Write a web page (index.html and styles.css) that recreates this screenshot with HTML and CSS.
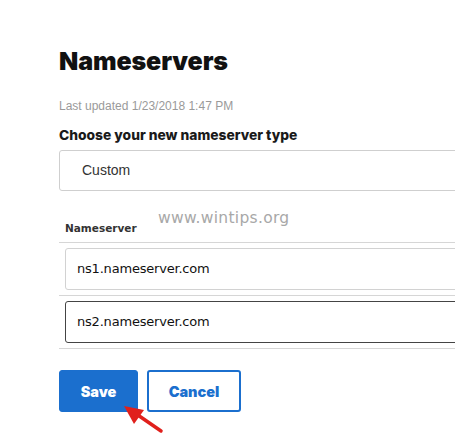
FILE: index.html
```html
<!DOCTYPE html>
<html>
<head>
<meta charset="utf-8">
<link rel="stylesheet" href="styles.css">
</head>
<body>
<div class="page">
  <div class="form">
    <h1 class="title">Nameservers</h1>
    <div class="updated">Last updated 1/23/2018 1:47 PM</div>
    <div class="field-label">Choose your new nameserver type</div>
    <div class="select">Custom</div>
    <div class="ns-head">
      <span class="ns-label">Nameserver</span>
      <span class="watermark">www.wintips.org</span>
    </div>
    <div class="row"><div class="input">ns1.nameserver.com</div></div>
    <div class="row"><div class="input focused">ns2.nameserver.com</div></div>
    <div class="actions">
      <button class="btn primary">Save</button>
      <button class="btn secondary">Cancel</button>
      <svg class="arrow" width="60" height="40" viewBox="0 0 60 40">
        <line x1="51" y1="32" x2="22" y2="12" stroke="#e0201c" stroke-width="3.5" stroke-linecap="round"/>
        <polygon points="14,7 34,11 24,25" fill="#e0201c"/>
      </svg>
    </div>
  </div>
</div>
</body>
</html>
```
FILE: styles.css
```css
html, body {
  margin: 0;
  padding: 0;
  background: #fff;
}
.page {
  width: 455px;
  height: 442px;
  box-sizing: border-box;
  overflow: hidden;
  padding-left: 59px;
  padding-top: 48px;
}
.form {
  width: 460px;
  font-family: "Liberation Sans", Arial, sans-serif;
  color: #111;
}
.title {
  margin: 0;
  font-family: "Inter", "Liberation Sans", sans-serif;
  font-weight: 900;
  font-size: 25px;
  line-height: 26px;
  letter-spacing: -0.1px;
  color: #111;
}
.updated {
  margin-top: 25px;
  font-size: 12px;
  line-height: 14px;
  color: #9a9a9a;
}
.field-label {
  margin-top: 14px;
  font-family: "Inter", "Liberation Sans", sans-serif;
  font-weight: 800;
  font-size: 13.8px;
  line-height: 16px;
  color: #1a1a1a;
}
.select {
  margin-top: 7px;
  box-sizing: border-box;
  height: 41px;
  border: 1px solid #cfcfcf;
  border-radius: 3px;
  padding-left: 22px;
  font-size: 14px;
  line-height: 39px;
  color: #333;
}
.ns-head {
  position: relative;
  height: 52px;
  border-bottom: 1px solid #d6d6d6;
  box-sizing: border-box;
}
.ns-label {
  position: absolute;
  left: 6px;
  top: 31px;
  font-family: "DejaVu Sans", sans-serif;
  font-weight: 700;
  font-size: 10.5px;
  color: #333;
}
.watermark {
  position: absolute;
  left: 99px;
  top: 18px;
  font-family: "DejaVu Sans", sans-serif;
  font-size: 15.5px;
  color: #a8a8a8;
  letter-spacing: 0.3px;
}
.row {
  padding: 5px 0 5px 6px;
  border-bottom: 1px solid #d6d6d6;
}
.input {
  box-sizing: border-box;
  height: 42px;
  border: 1px solid #d2d2d2;
  border-radius: 3px;
  padding-left: 11px;
  font-family: "DejaVu Sans", sans-serif;
  font-size: 13px;
  letter-spacing: -0.2px;
  line-height: 40px;
  color: #111;
}
.input.focused {
  border: 1px solid #444;
}
.actions {
  position: relative;
  display: flex;
  gap: 9px;
  margin-top: 21px;
}
.btn {
  box-sizing: border-box;
  height: 42px;
  border-radius: 3px;
  font-family: "Inter", "Liberation Sans", sans-serif;
  font-weight: 900;
  font-size: 14.5px;
  padding: 0;
  cursor: pointer;
}
.primary {
  width: 79px;
  background: #1b6fce;
  border: 1px solid #1b6fce;
  color: #fff;
}
.secondary {
  width: 94px;
  background: #fff;
  border: 2px solid #1b6fce;
  color: #1b6fce;
}
.arrow {
  position: absolute;
  left: 51px;
  top: 29px;
}
```
